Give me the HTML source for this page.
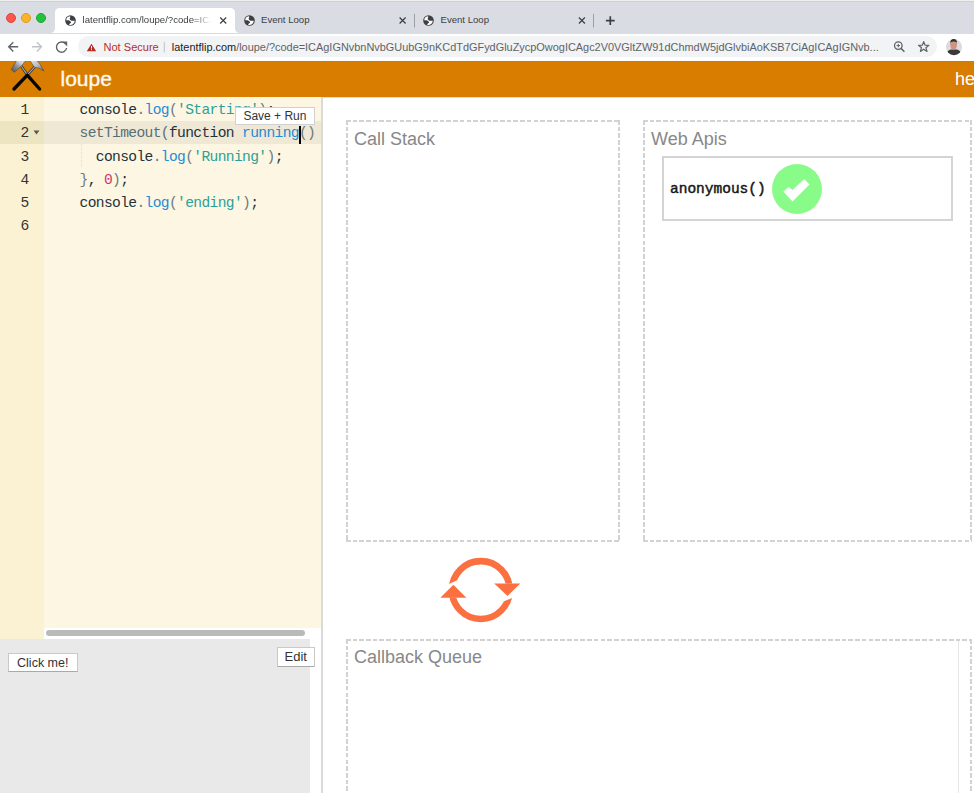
<!DOCTYPE html>
<html><head><meta charset="utf-8">
<style>
*{margin:0;padding:0;box-sizing:border-box}
html,body{width:974px;height:793px;overflow:hidden;background:#fff;font-family:"Liberation Sans",sans-serif}
.abs{position:absolute}
svg{position:absolute;overflow:visible}
#tabstrip{left:0;top:0;width:974px;height:33.5px;background:#d9dce3}
#toolbar{left:0;top:33.5px;width:974px;height:28px;background:#fff}
.tl{width:10px;height:10px;border-radius:50%;top:13px}
.tabtxt{font-size:9.6px;color:#3c4043;white-space:nowrap;line-height:12px}
#omni{left:78px;top:36px;width:859px;height:21px;background:#f1f3f4;border-radius:11px}
#header{left:0;top:61px;width:974px;height:36px;background:#d87d00}
#gutter{left:0;top:97px;width:44px;height:541.7px;background:#fbf1d3}
#code{left:44px;top:97px;width:277px;height:531px;background:#fdf6e3}
#hscroll{left:44px;top:628px;width:277px;height:10.5px;background:#fff}
#thumb{left:46px;top:630px;width:259px;height:6px;background:#b9bbbb;border-radius:3px}
#sep{left:320.8px;top:97px;width:2.2px;height:696px;background:#dadada}
#output{left:0;top:638.5px;width:310px;height:155px;background:#e9e9e9}
#outstrip{left:310px;top:638px;width:10px;height:155px;background:#fff}
.ln{position:absolute;left:20.5px;font-family:"Liberation Mono",monospace;font-size:14.6px;line-height:16px;color:#333}
.cl{position:absolute;left:79.5px;font-family:"Liberation Mono",monospace;font-size:14.6px;letter-spacing:-0.63px;line-height:16px;white-space:pre;color:#22323a}
.p{color:#6c7b80}.f{color:#268bd2}.s{color:#2aa198}.n{color:#cc3868}.g{color:#586e75}
.btn{position:absolute;background:#fff;border:1px solid #c9c9c9;border-bottom-color:#a9a9a9;font-size:13px;color:#333;line-height:16px;text-align:center}
.dh{position:absolute;height:2px;background:repeating-linear-gradient(to right,#d2d2d2 0 4.6px,transparent 4.6px 6.7px)}
.dv{position:absolute;width:2px;background:repeating-linear-gradient(to bottom,#d2d2d2 0 4.6px,transparent 4.6px 6.7px)}
.boxtitle{position:absolute;font-size:18px;color:#888;line-height:22px}
</style></head><body>
<!-- ============ tab strip ============ -->
<div id="tabstrip" class="abs"></div>
<div class="abs" style="left:0;top:0;width:974px;height:1.3px;background:#f0f0f0"></div><div class="abs" style="left:0;top:1.3px;width:974px;height:0.8px;background:#cfd0d3"></div>
<div class="abs tl" style="left:6px;background:#fc5650;border:0.5px solid #e0443e"></div>
<div class="abs tl" style="left:21px;background:#fdb42a;border:0.5px solid #dd9a1f"></div>
<div class="abs tl" style="left:36px;background:#23c23d;border:0.5px solid #1aa52e"></div>
<!-- active tab -->
<svg style="left:0;top:0" width="974" height="34">
  <path d="M50 33 Q55 33 55 28 L55 13 Q55 8 60 8 L230 8 Q235 8 235 13 L235 28 Q235 33 240 33 Z" fill="#fff"/>
  <line x1="414.5" y1="14" x2="414.5" y2="27.5" stroke="#9aa0a6" stroke-width="1"/>
  <line x1="593.5" y1="14" x2="593.5" y2="27.5" stroke="#9aa0a6" stroke-width="1"/>
</svg>
<!-- globe icons -->
<svg style="left:64.7px;top:15.2px" width="11" height="11" viewBox="-5.5 -5.5 11 11"><circle r="5.3" fill="#3c4043"/><path fill="#fff" d="M-4.3 -0.2 A4.4 4.4 0 0 1 -0.8 -4.3 L-0.1 -3.5 Q-1.1 -2.4 -0.7 -1.3 Q-0.3 -0.4 0.8 0.2 L0.4 0.9 Q-1.2 0.2 -1.8 -0.2 Z"/><path fill="#fff" d="M0.4 0.3 L4.3 0.3 A4.4 4.4 0 0 1 -1.4 4.2 L-0.7 3 Q0.5 2.8 0.6 1.8 Q0.6 1 -0.1 0.7 Z"/></svg>
<svg style="left:244.1px;top:15.2px" width="11" height="11" viewBox="-5.5 -5.5 11 11"><circle r="5.3" fill="#3c4043"/><path fill="#fff" d="M-4.3 -0.2 A4.4 4.4 0 0 1 -0.8 -4.3 L-0.1 -3.5 Q-1.1 -2.4 -0.7 -1.3 Q-0.3 -0.4 0.8 0.2 L0.4 0.9 Q-1.2 0.2 -1.8 -0.2 Z"/><path fill="#fff" d="M0.4 0.3 L4.3 0.3 A4.4 4.4 0 0 1 -1.4 4.2 L-0.7 3 Q0.5 2.8 0.6 1.8 Q0.6 1 -0.1 0.7 Z"/></svg>
<svg style="left:423.1px;top:15.2px" width="11" height="11" viewBox="-5.5 -5.5 11 11"><circle r="5.3" fill="#3c4043"/><path fill="#fff" d="M-4.3 -0.2 A4.4 4.4 0 0 1 -0.8 -4.3 L-0.1 -3.5 Q-1.1 -2.4 -0.7 -1.3 Q-0.3 -0.4 0.8 0.2 L0.4 0.9 Q-1.2 0.2 -1.8 -0.2 Z"/><path fill="#fff" d="M0.4 0.3 L4.3 0.3 A4.4 4.4 0 0 1 -1.4 4.2 L-0.7 3 Q0.5 2.8 0.6 1.8 Q0.6 1 -0.1 0.7 Z"/></svg>
<div class="abs tabtxt" style="left:82.5px;top:14px;width:128px;overflow:hidden;-webkit-mask-image:linear-gradient(to right,#000 110px,transparent 128px)">latentflip.com/loupe/?code=ICAgIGNv</div>
<div class="abs tabtxt" style="left:261px;top:14px">Event Loop</div>
<div class="abs tabtxt" style="left:440.5px;top:14px">Event Loop</div>
<svg style="left:0;top:0" width="974" height="34">
  <g stroke="#3c4043" stroke-width="1.2">
    <path d="M220.2 17.5 L226.2 23.5 M226.2 17.5 L220.2 23.5"/>
    <path d="M399.6 17.5 L405.6 23.5 M405.6 17.5 L399.6 23.5"/>
    <path d="M578.9 17.5 L584.9 23.5 M584.9 17.5 L578.9 23.5"/>
  </g>
  <path d="M605.9 20.6 H614.7 M610.3 16.2 V25" stroke="#3c4043" stroke-width="1.7"/>
</svg>

<!-- ============ toolbar ============ -->
<div id="toolbar" class="abs"></div>
<div id="omni" class="abs"></div>
<svg style="left:0;top:34px" width="974" height="27">
  <g fill="none" stroke="#5f6368" stroke-width="1.4">
    <path d="M18.2 12.8 H9.2 M13.3 8.2 L8.7 12.8 L13.3 17.4"/>
  </g>
  <g fill="none" stroke="#c0c3c7" stroke-width="1.4">
    <path d="M32 12.8 H41 M36.9 8.2 L41.5 12.8 L36.9 17.4"/>
  </g>
  <path d="M65.3 9.6 A5.1 5.1 0 1 0 66.6 14" fill="none" stroke="#5f6368" stroke-width="1.4"/>
  <path d="M62.4 7.6 L67.2 7.6 L67.2 12.4 Z" fill="#5f6368"/>
  <!-- warning -->
  <path d="M91.5 9.8 L96.2 17.3 L86.8 17.3 Z" fill="#b8291f"/>
  <rect x="91" y="12" width="1" height="2.6" fill="#fff"/>
  <rect x="91" y="15.2" width="1" height="1" fill="#fff"/>
  <line x1="164.3" y1="7.8" x2="164.3" y2="18.4" stroke="#bdc1c6" stroke-width="1"/>
  <!-- zoom -->
  <circle cx="898.3" cy="11.6" r="3.8" fill="none" stroke="#5f6368" stroke-width="1.3"/>
  <path d="M901 14.4 L904.4 17.7" stroke="#5f6368" stroke-width="1.5"/>
  <path d="M896.6 11.6 H900 M898.3 9.9 V13.3" stroke="#5f6368" stroke-width="1"/>
  <!-- star -->
  <path d="M923.7 7.6 L925.1 11.2 L928.9 11.3 L925.9 13.7 L927 17.4 L923.7 15.2 L920.4 17.4 L921.5 13.7 L918.5 11.3 L922.3 11.2 Z" fill="none" stroke="#5f6368" stroke-width="1.2" stroke-linejoin="round"/>
  <!-- avatar -->
  <defs><clipPath id="av"><circle cx="954" cy="13" r="8.2"/></clipPath></defs>
  <g clip-path="url(#av)">
    <circle cx="954" cy="13" r="8.2" fill="#dcdcdc"/>
    <path d="M945.5 24 Q946 16.8 950.8 15.6 L957 15.6 Q961.5 16.8 962.5 24 Z" fill="#3a3a3a"/>
    <ellipse cx="953.6" cy="10.8" rx="3.4" ry="5" fill="#cf9486"/>
    <path d="M950.2 10 Q950 5.2 953.7 5.1 Q957.3 5.2 957.1 10 L956.6 8.2 Q953.7 6.6 950.8 8.2 Z" fill="#35302c"/>
  </g>
</svg>
<div class="abs" style="left:103.5px;top:40.5px;font-size:11.05px;line-height:13px;color:#b3312b;white-space:nowrap">Not Secure</div>
<div class="abs" id="url" style="left:171.8px;top:40.5px;font-size:10.93px;line-height:13px;color:#5f6368;white-space:nowrap"><span style="color:#202124">latentflip.com</span>/loupe/?code=ICAgIGNvbnNvbGUubG9nKCdTdGFydGluZycpOwogICAgc2V0VGltZW91dChmdW5jdGlvbiAoKSB7CiAgICAgIGNvb...</div>

<!-- ============ header ============ -->
<div id="header" class="abs"></div>
<div class="abs" style="left:0;top:61px;width:974px;height:1px;background:#c97a1c"></div>
<div class="abs" style="left:0;top:97px;width:974px;height:1px;background:#f3dcae"></div>
<svg style="left:0;top:61px;overflow:hidden" width="50" height="36" viewBox="0 61 50 36">
  <defs>
    <linearGradient id="hgl" x1="0" y1="1" x2="1" y2="0"><stop offset="0" stop-color="#4d5156"/><stop offset="0.45" stop-color="#8d9196"/><stop offset="0.75" stop-color="#d6d8da"/><stop offset="1" stop-color="#c4c7ca"/></linearGradient>
    <linearGradient id="hgr" x1="0" y1="0" x2="1" y2="1"><stop offset="0" stop-color="#e2e4e6"/><stop offset="0.5" stop-color="#b9bdc1"/><stop offset="1" stop-color="#5e6267"/></linearGradient>
  </defs>
  <path d="M11.3 69.4 L16.5 60.5 L25.8 60.5 L21.6 65.8 L17.4 69.6 L14.2 72.3 Z" fill="url(#hgl)" stroke="#3a3d40" stroke-width="0.5"/>
  <path d="M30 60.5 L36.9 60.5 L40.2 64.5 L43.9 70.9 L38.5 68 L35.9 67.5 L34.2 67 Z" fill="url(#hgr)" stroke="#3a3d40" stroke-width="0.5"/>
  <path d="M21.4 66.2 L27.3 74.9 M34.5 67.2 L27.3 74.9" stroke="#2e3033" stroke-width="2.6"/>
  <path d="M21.4 66.2 L27.3 74.9 M34.5 67.2 L27.3 74.9" stroke="#a4acb3" stroke-width="1.1"/>
  <path d="M27.3 75.2 L14 89" stroke="#060606" stroke-width="3.3" stroke-linecap="round"/>
  <path d="M27.3 75.2 L39.6 89" stroke="#060606" stroke-width="3.3" stroke-linecap="round"/>
</svg>
<div class="abs" style="left:60.5px;top:66px;font-size:21px;color:#fdfaf2;-webkit-text-stroke:0.35px #fdfaf2;line-height:26px">loupe</div>
<div class="abs" style="left:955px;top:67.5px;font-size:18px;color:#fff;line-height:22px">he</div>

<!-- ============ editor ============ -->
<div id="gutter" class="abs"></div>
<div id="code" class="abs"></div>
<div class="abs" style="left:0;top:120.5px;width:44px;height:23px;background:#ede5c1"></div>
<div class="abs" style="left:44px;top:120.5px;width:277px;height:23px;background:#eee8d5"></div>
<div id="hscroll" class="abs"></div>
<div id="thumb" class="abs"></div>
<div id="output" class="abs"></div>
<div id="outstrip" class="abs"></div>
<div id="sep" class="abs"></div>

<div class="ln" style="top:102px">1</div>
<div class="ln" style="top:125.25px">2</div>
<div class="ln" style="top:148.5px">3</div>
<div class="ln" style="top:171.75px">4</div>
<div class="ln" style="top:195px">5</div>
<div class="ln" style="top:218.25px">6</div>
<svg style="left:0;top:0" width="44" height="200"><path d="M33.6 130.6 L39.4 130.6 L36.5 134.4 Z" fill="#555"/></svg>

<div class="cl" style="top:102px">console<span class="p">.</span><span class="f">log</span><span class="p">(</span><span class="s">'Starting'</span><span class="p">)</span>;</div>
<div class="cl" style="top:125.25px"><span class="g">setTimeout(</span>function <span class="f">running</span><span class="p">()</span></div>
<div class="cl" style="top:148.5px">  console<span class="p">.</span><span class="f">log</span><span class="p">(</span><span class="s">'Running'</span><span class="p">)</span>;</div>
<div class="cl" style="top:171.75px"><span class="p">}</span>, <span class="n">0</span><span class="p">)</span>;</div>
<div class="cl" style="top:195px">console<span class="p">.</span><span class="f">log</span><span class="p">(</span><span class="s">'ending'</span><span class="p">)</span>;</div>
<div class="abs" style="left:80.5px;top:144px;width:1px;height:23px;background:repeating-linear-gradient(to bottom,#e4dcc6 0 1px,transparent 1px 2px)"></div>
<!-- cursor -->
<div class="abs" style="left:299px;top:126px;width:2px;height:18px;background:#000"></div>
<!-- save + run -->
<div class="btn" style="left:235px;top:106.5px;width:79.8px;height:18.3px;border-color:#d0d0d0;line-height:16px;font-size:12px">Save + Run</div>

<!-- output buttons -->
<div class="btn" style="left:8px;top:653px;width:69.5px;height:19px;line-height:18.5px;font-size:12.5px">Click me!</div>
<div class="btn" style="left:276.5px;top:647.3px;width:38.5px;height:19.5px;line-height:18px">Edit</div>

<!-- ============ boxes ============ -->
<!-- call stack -->
<div class="dh" style="left:345.5px;top:120px;width:274.5px"></div>
<div class="dh" style="left:345.5px;top:540px;width:274.5px"></div>
<div class="dv" style="left:345.5px;top:120px;height:422px"></div>
<div class="dv" style="left:618px;top:120px;height:422px"></div>
<div class="boxtitle" style="left:354px;top:128px">Call Stack</div>
<!-- web apis -->
<div class="dh" style="left:642.5px;top:120px;width:329px"></div>
<div class="dh" style="left:642.5px;top:540px;width:329px"></div>
<div class="dv" style="left:642.5px;top:120px;height:422px"></div>
<div class="dv" style="left:969.5px;top:120px;height:422px"></div>
<div class="boxtitle" style="left:651px;top:128px">Web Apis</div>
<div class="abs" style="left:662px;top:156px;width:291px;height:65px;border:2px solid #d4d4d4"></div>
<div class="abs" style="left:670px;top:180px;font-family:'Liberation Mono',monospace;font-weight:normal;-webkit-text-stroke:0.45px #151515;font-size:14.5px;line-height:18px;color:#151515">anonymous()</div>
<svg style="left:771.6px;top:163.6px" width="50" height="50">
  <circle cx="25" cy="25" r="25" fill="#88fb88"/>
  <path d="M16.7 22.9 L20.5 25.9 L32.2 15.1 L37.5 20.4 L20.5 37.4 L11.4 27.6 Z" fill="#fff"/>
</svg>
<!-- cycle icon -->
<svg style="left:0;top:0" width="974" height="793">
  <defs>
    <clipPath id="ctop"><path d="M430 540 L535 540 L535 583.6 L460 583.6 L460 578.9 L430 592.5 Z"/></clipPath>
    <clipPath id="cbot"><path d="M430 640 L535 640 L535 588.5 L500 603 L470 603 L470 597.6 L430 597.6 Z"/></clipPath>
  </defs>
  <circle cx="480.8" cy="590.05" r="28.9" fill="none" stroke="#fa7040" stroke-width="6.6" clip-path="url(#ctop)"/>
  <circle cx="480.8" cy="590.05" r="28.9" fill="none" stroke="#fa7040" stroke-width="6.6" clip-path="url(#cbot)"/>
  <path d="M494.2 583.4 L520.3 583.4 L507.5 595.9 Z" fill="#fa7040"/>
  <path d="M440.3 597.7 L466.4 597.7 L453.4 584.8 Z" fill="#fa7040"/>
</svg>
<!-- callback queue -->
<div class="dh" style="left:345.5px;top:639px;width:626px"></div>
<div class="dv" style="left:345.5px;top:639px;height:160px"></div>
<div class="dv" style="left:969.5px;top:639px;height:160px"></div>
<div class="abs" style="left:958px;top:641px;width:1px;height:160px;background:#e6e6e6"></div>
<div class="boxtitle" style="left:354px;top:646px">Callback Queue</div>
</body></html>
